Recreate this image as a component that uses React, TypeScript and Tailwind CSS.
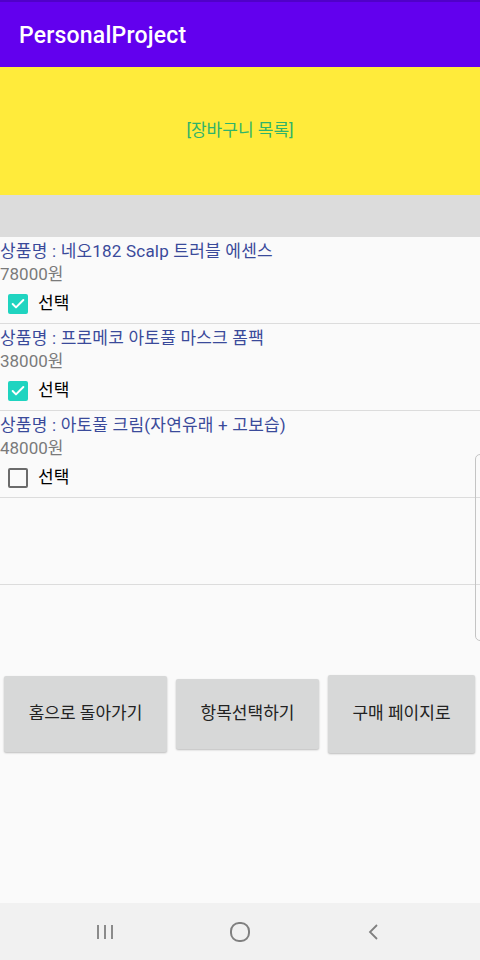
import { Check } from "lucide-react";

const items = [
  { name: "상품명 : 네오182 Scalp 트러블 에센스", price: "78000원", checked: true },
  { name: "상품명 : 프로메코 아토풀 마스크 폼팩", price: "38000원", checked: true },
  { name: "상품명 : 아토풀 크림(자연유래 + 고보습)", price: "48000원", checked: false },
];

const font = { fontFamily: "Roboto, 'Noto Sans CJK KR', sans-serif" };

function CheckBox({ checked }: { checked: boolean }) {
  if (checked) {
    return (
      <div className="w-[20px] h-[20px] rounded-[2px] bg-[#1fd4c0] flex items-center justify-center">
        <Check className="w-[16px] h-[16px] text-white" strokeWidth={3} />
      </div>
    );
  }
  return <div className="w-[20px] h-[20px] rounded-[2px] border-2 border-[#6b6b6b]" />;
}

export default function App() {
  return (
    <div className="relative w-[480px] h-[960px] bg-[#fafafa] flex flex-col overflow-hidden" style={font}>
      {/* app bar */}
      <div className="h-[67px] bg-[#6200ee] border-t-2 border-[#5000c8] flex items-center pl-[19px] pt-[3px] shrink-0">
        <span className="text-white text-[23px] font-medium tracking-[0.2px]">PersonalProject</span>
      </div>

      <div className="h-[128px] bg-[#ffeb3b] flex items-center justify-center shrink-0">
        <span className="text-[#2fb36a] text-[17px]">[장바구니 목록]</span>
      </div>
      <div className="h-[42px] bg-[#dcdcdc] shrink-0" />

      {/* list */}
      <div className="flex flex-col">
        {items.map((item, i) => (
          <div key={i} className="h-[87px] border-b border-[#dcdcdc] flex flex-col">
            <div className="h-[26px] leading-[26px] pt-[1px] text-[17px] text-[#3a4a9a] whitespace-nowrap tracking-[0.2px]">{item.name}</div>
            <div className="h-[22px] leading-[22px] text-[17px] text-[#7a7a7a]">{item.price}</div>
            <div className="flex-1 flex items-center pl-[8px] gap-[10px]">
              <CheckBox checked={item.checked} />
              <span className="text-[17px] text-black">선택</span>
            </div>
          </div>
        ))}
        <div className="h-[87px] border-b border-[#dcdcdc]" />
      </div>

      {/* buttons */}
      <div className="flex items-center pt-[90px] pl-[4px] gap-[9px]">
        <button className="w-[163px] h-[76px] bg-[#d7d8d8] rounded-[2px] shadow-[0_1px_2px_rgba(0,0,0,0.25)] text-[17px] text-[#222]">
          홈으로 돌아가기
        </button>
        <button className="w-[143px] h-[70px] bg-[#d7d8d8] rounded-[2px] shadow-[0_1px_2px_rgba(0,0,0,0.25)] text-[17px] text-[#222]">
          항목선택하기
        </button>
        <button className="w-[147px] h-[78px] bg-[#d7d8d8] rounded-[2px] shadow-[0_1px_2px_rgba(0,0,0,0.25)] text-[17px] text-[#222]">
          구매 페이지로
        </button>
      </div>

      <div className="flex-1" />

      {/* nav bar */}
      <div className="h-[57px] bg-[#f1f1f1] flex items-center pl-[95px] shrink-0">
        <svg width="20" height="18" viewBox="0 0 20 18" className="text-[#808080]">
          <path d="M3 2v14M10 2v14M17 2v14" stroke="currentColor" strokeWidth="1.8" />
        </svg>
        <svg width="22" height="22" viewBox="0 0 22 22" className="text-[#808080] ml-[114px]">
          <rect x="2" y="2" width="18" height="18" rx="8" fill="none" stroke="currentColor" strokeWidth="2" />
        </svg>
        <svg width="14" height="20" viewBox="0 0 14 20" className="text-[#808080] ml-[115px]">
          <path d="M11 3L4 10l7 7" fill="none" stroke="currentColor" strokeWidth="1.8" />
        </svg>
      </div>

      {/* edge handle overlay */}
      <div className="absolute left-[475px] top-[454px] w-[10px] h-[187px] border border-[#c4c4c4] rounded-[6px]" />
    </div>
  );
}
